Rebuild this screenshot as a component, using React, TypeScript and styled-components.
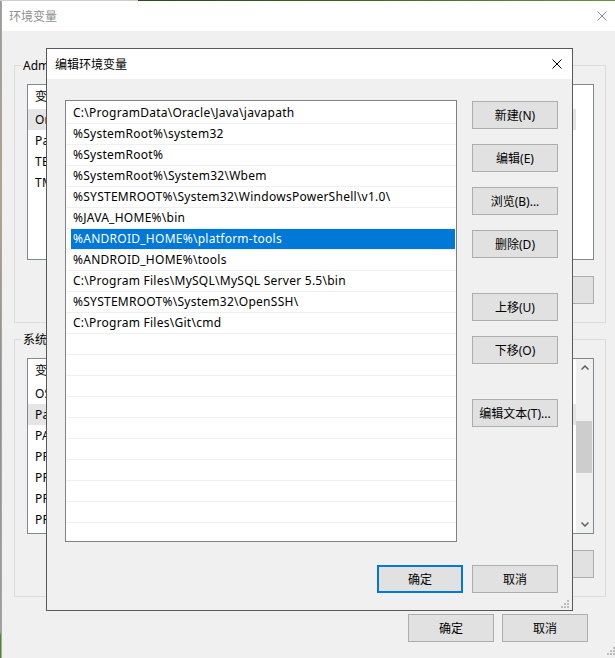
import React from 'react';
import styled, { createGlobalStyle } from 'styled-components';

const GlobalStyle = createGlobalStyle`
  html, body { margin: 0; padding: 0; }
  body {
    background: #f0f0f0;
    font-family: "Noto Sans", "Noto Sans CJK SC", sans-serif;
    font-size: 12px;
    color: #000;
  }
  * { box-sizing: border-box; }
`;

const Desktop = styled.div`
  position: relative;
  width: 615px;
  height: 658px;
  overflow: hidden;
  display: grid;
  grid-template-columns: 1px 616px;
  grid-template-rows: 1px 657px;
`;

const DesktopTop = styled.div`
  grid-column: 1 / 3;
  background: linear-gradient(90deg, #cfcfcf 0, #cfcfcf 138px, #2c4a1e 138px, #3d5e29 55%, #6f8f4a 100%);
`;

const DesktopEdge = styled.div`
  background: linear-gradient(180deg, #9c9c9c 0%, #b6a38c 30%, #8f8f8f 60%, #a0a0a0 96%, #4f8d1f 96.6%, #4f8d1f 100%);
`;

const Window = styled.div`
  position: relative;
  display: flex;
  flex-direction: column;
  background: #f0f0f0;
  border-left: 1px solid #a3a3a3;
`;

const TitleBar = styled.div<{ $active?: boolean }>`
  flex: none;
  height: 30px;
  display: flex;
  align-items: center;
  justify-content: space-between;
  background: #fff;
  padding-left: ${p => (p.$active ? 8 : 7)}px;
  color: ${p => (p.$active ? '#000' : '#8f8f8f')};
  white-space: nowrap;
`;

const CloseBox = styled.div`
  width: 30px;
  height: 30px;
  display: grid;
  place-items: center;
`;

const WindowBody = styled.div`
  flex: 1;
  display: flex;
  flex-direction: column;
  padding: 34px 11px 0 12px;
`;

const Group = styled.section`
  border: 1px solid #dcdcdc;
  padding: 0 11px 18px 12px;
  & + & { margin-top: 16px; }
`;

const GroupTitle = styled.div`
  width: fit-content;
  margin: -8px 0 0 -6px;
  padding: 0 2px;
  line-height: 16px;
  background: #f0f0f0;
  white-space: nowrap;
`;

const VarList = styled.div`
  margin-top: 10px;
  height: 176px;
  border: 1px solid #828790;
  background: #fff;
  display: flex;
  overflow: hidden;
`;

const VarRows = styled.div<{ $reserve?: boolean }>`
  flex: 1;
  min-width: 0;
  margin-right: ${p => (p.$reserve ? 17 : 0)}px;
`;

const VarHeader = styled.div`
  height: 24px;
  line-height: 24px;
  padding-left: 7px;
  white-space: nowrap;
`;

const VarRow = styled.div<{ $selected?: boolean }>`
  height: 21px;
  line-height: 21px;
  padding-left: 7px;
  white-space: nowrap;
  letter-spacing: 0.25px;
  background: ${p => (p.$selected ? '#e5e5e5' : 'transparent')};
`;

const ScrollBar = styled.div`
  flex: none;
  width: 17px;
  background: #f0f0f0;
  display: flex;
  flex-direction: column;
`;

const ScrollArrow = styled.div`
  flex: none;
  height: 17px;
  display: grid;
  place-items: center;
`;

const ScrollTrack = styled.div`
  flex: 1;
  padding-top: 45px;
`;

const ScrollThumb = styled.div`
  height: 52px;
  margin-right: 1px;
  background: #cdcdcd;
`;

const ButtonRow = styled.div<{ $top: number; $gap: number; $inset?: number }>`
  display: flex;
  justify-content: flex-end;
  gap: ${p => p.$gap}px;
  margin-top: ${p => p.$top}px;
  padding-right: ${p => p.$inset ?? 0}px;
`;

const Button = styled.button<{ $default?: boolean; $gapBefore?: boolean }>`
  flex: none;
  width: 86px;
  height: 28px;
  margin: ${p => (p.$gapBefore ? '20px 0 0' : '0')};
  padding: 0;
  border: ${p => (p.$default ? '2px solid #0078d7' : '1px solid #adadad')};
  background: #e1e1e1;
  font: inherit;
  color: #000;
  white-space: nowrap;
  display: flex;
  align-items: center;
  justify-content: center;
`;

const Grip = styled.div<{ $right: number; $bottom: number }>`
  position: absolute;
  right: ${p => p.$right}px;
  bottom: ${p => p.$bottom}px;
  width: 8px;
  height: 8px;
  display: flex;
`;

const Dialog = styled.div`
  position: absolute;
  left: 46px;
  top: 48px;
  width: 527px;
  height: 563px;
  border: 1px solid #595959;
  background: #f0f0f0;
  display: flex;
  flex-direction: column;
`;

const DialogBody = styled.div`
  flex: 1;
  display: flex;
  flex-direction: column;
  padding: 21px 14px 0 18px;
`;

const DialogMain = styled.div`
  display: flex;
  gap: 15px;
`;

const PathList = styled.div`
  flex: none;
  width: 392px;
  height: 442px;
  border: 1px solid #828282;
  background: #fff;
  padding-top: 2px;
  overflow: hidden;
`;

const PathRow = styled.div`
  height: 21px;
  border-bottom: 1px solid #f0f0f0;
  padding: 0 1px 0 5px;
`;

const PathText = styled.div<{ $selected?: boolean }>`
  height: 20px;
  line-height: 20px;
  padding-left: 2px;
  white-space: nowrap;
  letter-spacing: 0.26px;
  background: ${p => (p.$selected ? '#0078d7' : 'transparent')};
  color: ${p => (p.$selected ? '#fff' : '#000')};
`;

const SideButtons = styled.div`
  display: flex;
  flex-direction: column;
  gap: 15px;
  padding-top: 1px;
`;

const CloseIcon = ({ color }: { color: string }) => (
  <svg width="10" height="10" viewBox="0 0 10 10">
    <path d="M0.5 0.5 L9.5 9.5 M9.5 0.5 L0.5 9.5" stroke={color} strokeWidth="1" fill="none" />
  </svg>
);

const Chevron = ({ up }: { up?: boolean }) => (
  <svg width="8" height="5" viewBox="0 0 8 5">
    <path d={up ? 'M0.5 4.5 L4 1 L7.5 4.5' : 'M0.5 0.5 L4 4 L7.5 0.5'} stroke="#606060" strokeWidth="1.5" fill="none" />
  </svg>
);

const GripDots = () => (
  <svg width="8" height="8" viewBox="0 0 8 8">
    {[[6, 0], [3, 3], [6, 3], [0, 6], [3, 6], [6, 6]].map(([x, y]) => (
      <rect key={`${x}-${y}`} x={x} y={y} width="2" height="2" fill="#bcbcbc" />
    ))}
  </svg>
);

const paths = [
  'C:\\ProgramData\\Oracle\\Java\\javapath',
  '%SystemRoot%\\system32',
  '%SystemRoot%',
  '%SystemRoot%\\System32\\Wbem',
  '%SYSTEMROOT%\\System32\\WindowsPowerShell\\v1.0\\',
  '%JAVA_HOME%\\bin',
  '%ANDROID_HOME%\\platform-tools',
  '%ANDROID_HOME%\\tools',
  'C:\\Program Files\\MySQL\\MySQL Server 5.5\\bin',
  '%SYSTEMROOT%\\System32\\OpenSSH\\',
  'C:\\Program Files\\Git\\cmd',
];
const SELECTED_PATH = 6;
const TOTAL_ROWS = 21;

const userVars = ['OneDrive', 'Path', 'TEMP', 'TMP'];
const systemVars = [
  'OS',
  'Path',
  'PATHEXT',
  'PROCESSOR_ARCHITECTURE',
  'PROCESSOR_IDENTIFIER',
  'PROCESSOR_LEVEL',
  'PROCESSOR_REVISION',
];

const sideButtons: { label: string; gapBefore?: boolean }[] = [
  { label: '新建(N)' },
  { label: '编辑(E)' },
  { label: '浏览(B)...' },
  { label: '删除(D)' },
  { label: '上移(U)', gapBefore: true },
  { label: '下移(O)' },
  { label: '编辑文本(T)...', gapBefore: true },
];

export default function App() {
  const rows = Array.from({ length: TOTAL_ROWS }, (_, i) => paths[i] ?? '');
  return (
    <>
      <GlobalStyle />
      <Desktop>
        <DesktopTop />
        <DesktopEdge />
        <Window>
          <TitleBar>
            <span>环境变量</span>
            <CloseBox>
              <CloseIcon color="#8f8f8f" />
            </CloseBox>
          </TitleBar>
          <WindowBody>
            <Group>
              <GroupTitle>Administrator 的用户变量(U)</GroupTitle>
              <VarList>
                <VarRows $reserve>
                  <VarHeader>变量</VarHeader>
                  {userVars.map((v, i) => (
                    <VarRow key={v} $selected={i === 0}>{v}</VarRow>
                  ))}
                </VarRows>
              </VarList>
              <ButtonRow $top={16} $gap={9}>
                <Button>新建(N)...</Button>
                <Button>编辑(E)...</Button>
                <Button>删除(D)</Button>
              </ButtonRow>
            </Group>
            <Group>
              <GroupTitle>系统变量(S)</GroupTitle>
              <VarList>
                <VarRows>
                  <VarHeader>变量</VarHeader>
                  {systemVars.map((v, i) => (
                    <VarRow key={v} $selected={i === 1}>{v}</VarRow>
                  ))}
                </VarRows>
                <ScrollBar>
                  <ScrollArrow><Chevron up /></ScrollArrow>
                  <ScrollTrack><ScrollThumb /></ScrollTrack>
                  <ScrollArrow><Chevron /></ScrollArrow>
                </ScrollBar>
              </VarList>
              <ButtonRow $top={16} $gap={9}>
                <Button>新建(W)...</Button>
                <Button>编辑(I)...</Button>
                <Button>删除(L)</Button>
              </ButtonRow>
            </Group>
            <ButtonRow $top={17} $gap={8} $inset={18}>
              <Button>确定</Button>
              <Button>取消</Button>
            </ButtonRow>
          </WindowBody>
          <Grip $right={2} $bottom={3}><GripDots /></Grip>
        </Window>

        <Dialog>
          <TitleBar $active>
            <span>编辑环境变量</span>
            <CloseBox>
              <CloseIcon color="#000" />
            </CloseBox>
          </TitleBar>
          <DialogBody>
            <DialogMain>
              <PathList>
                {rows.map((p, i) => (
                  <PathRow key={i}>
                    <PathText $selected={i === SELECTED_PATH}>{p}</PathText>
                  </PathRow>
                ))}
              </PathList>
              <SideButtons>
                {sideButtons.map(b => (
                  <Button key={b.label} $gapBefore={b.gapBefore}>{b.label}</Button>
                ))}
              </SideButtons>
            </DialogMain>
            <ButtonRow $top={23} $gap={9}>
              <Button $default>确定</Button>
              <Button>取消</Button>
            </ButtonRow>
          </DialogBody>
          <Grip $right={3} $bottom={2}><GripDots /></Grip>
        </Dialog>
      </Desktop>
    </>
  );
}
